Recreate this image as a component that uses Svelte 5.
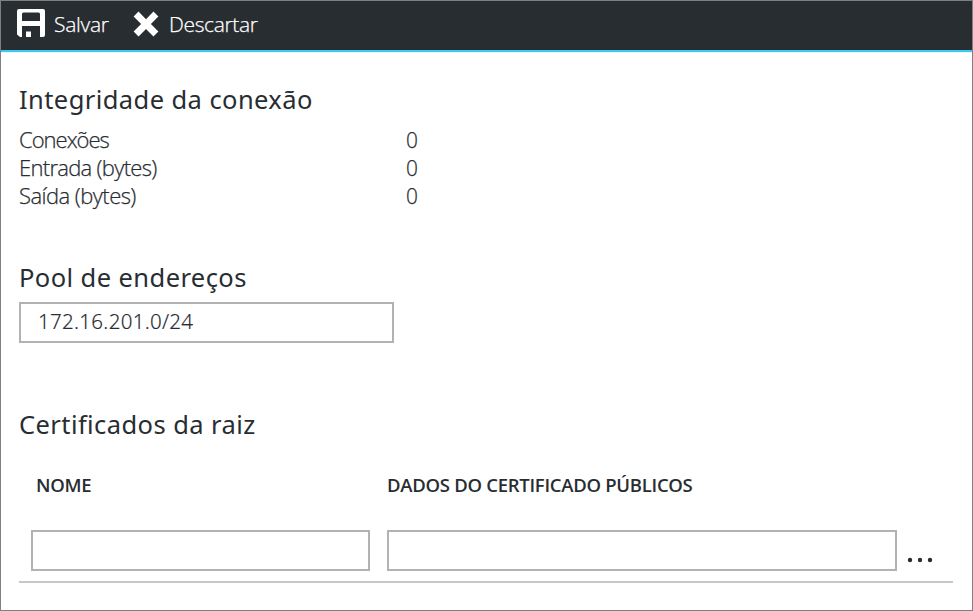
<script>
  const stats = [
    { label: 'Conexões', value: 0, spacing: -1 },
    { label: 'Entrada (bytes)', value: 0, spacing: -0.7 },
    { label: 'Saída (bytes)', value: 0, spacing: -0.55 }
  ];
  let pool = $state('172.16.201.0/24');
  let name = $state('');
  let data = $state('');
</script>

<div class="blade">
  <header>
    <button class="save">
      <svg width="28" height="28" viewBox="0 0 28 28">
        <path fill="#fff" fill-rule="evenodd" d="M2 0H26Q28 0 28 2V26Q28 28 26 28H23V17H5V28H3L0 25.500V2Q0 0 2 0ZM5 5V12H23V5Q23 3.500 21.500 3.500H6.500Q5 3.500 5 5ZM9 22.500V28H14V22.500Z" />
      </svg>
      <span>Salvar</span>
    </button>
    <button class="discard">
      <svg width="26" height="26" viewBox="0 0 26 26">
        <path fill="#fff" d="M5.500 .6L13 8.200L20.500 .6L25.400 5.500L17.900 13L25.400 20.500L20.500 25.400L13 17.900L5.500 25.400L.6 20.500L8.100 13L.6 5.500Z" />
      </svg>
      <span>Descartar</span>
    </button>
  </header>
  <main>
    <section class="health">
      <h2>Integridade da conexão</h2>
      <dl>
        {#each stats as s}
          <div class="stat">
            <dt style="letter-spacing: {s.spacing}px">{s.label}</dt>
            <dd>{s.value}</dd>
          </div>
        {/each}
      </dl>
    </section>
    <section class="pool">
      <h2>Pool de endereços</h2>
      <input bind:value={pool} aria-label="Pool de endereços" />
    </section>
    <section class="certs">
      <h2>Certificados da raiz</h2>
      <div class="heads">
        <span class="name">NOME</span>
        <span class="data">DADOS DO CERTIFICADO PÚBLICOS</span>
      </div>
      <div class="row">
        <input class="nameinput" bind:value={name} aria-label="Nome" />
        <input class="datainput" bind:value={data} aria-label="Dados" />
        <svg class="more" width="26" height="6" viewBox="0 0 26 6">
          <g fill="#282d33"><circle cx="3" cy="3" r="2.2" /><circle cx="13" cy="3" r="2.2" /><circle cx="23" cy="3" r="2.2" /></g>
        </svg>
      </div>
    </section>
  </main>
</div>

<style>
  :global(body) { margin: 0; background: #fff; }
  * { box-sizing: border-box; }
  .blade {
    width: 973px;
    height: 611px;
    border: 1px solid #808080;
    background: #fff;
    color: #282d32;
    font-family: "Open Sans", "Noto Sans", sans-serif;
    overflow: hidden;
  }
  header {
    display: flex;
    height: 51px;
    padding-left: 16px;
    background: #282d31;
    border-bottom: 2px solid #3fc8f0;
    box-shadow: 0 1px 0 #e2f6fc;
  }
  button {
    display: flex;
    align-items: center;
    height: 46px;
    padding: 0;
    border: 0;
    background: none;
    color: #fff;
    font: 300 21px/28px "Open Sans", sans-serif;
    white-space: nowrap;
    -webkit-text-stroke: 0.25px;
  }
  .save { width: 116px; gap: 9px; letter-spacing: -0.25px; }
  .save svg { margin-top: -2px; }
  .discard { gap: 10px; letter-spacing: -0.35px; }
  svg { flex: none; display: block; }
  main { padding: 28px 19px 0 18px; }
  h2 {
    margin: 0;
    height: 38px;
    font: 400 25.5px/38px "Noto Sans", sans-serif;
    letter-spacing: 0.42px;
    white-space: nowrap;
  }
  .health { height: 178px; }
  dl { margin: 7px 0 0; }
  .stat {
    display: flex;
    height: 28px;
    font: 300 22px/28px "Open Sans", sans-serif;
    -webkit-text-stroke: 0.25px;
  }
  dt { width: 387px; white-space: nowrap; }
  dd { margin: 0; transform: scaleX(0.95); transform-origin: left; }
  .pool { height: 147px; }
  input {
    display: block;
    height: 41px;
    padding: 0 0 3px 17px;
    border: 2px solid #b2b2b2;
    border-radius: 0;
    outline: 0;
    background: #fff;
    color: #282d32;
    font: 300 20.5px "Noto Sans", sans-serif;
    letter-spacing: 0.3px;
    -webkit-text-stroke: 0.15px;
  }
  .pool input { width: 375px; margin-top: 6px; }
  .heads {
    display: flex;
    margin-top: 28px;
    padding-left: 17px;
    height: 28px;
    font: 600 18.5px/28px "Open Sans", sans-serif;
    white-space: nowrap;
  }
  .name { width: 351px; letter-spacing: -0.3px; }
  .data { letter-spacing: -0.28px; }
  .row {
    display: flex;
    align-items: flex-start;
    height: 84px;
    padding: 31px 0 0 12px;
    border-bottom: 2px solid #c8c8c8;
  }
  .nameinput { width: 339px; margin-right: 17px; }
  .datainput { width: 510px; margin-right: 10px; }
  .more { margin-top: 27px; }
</style>
